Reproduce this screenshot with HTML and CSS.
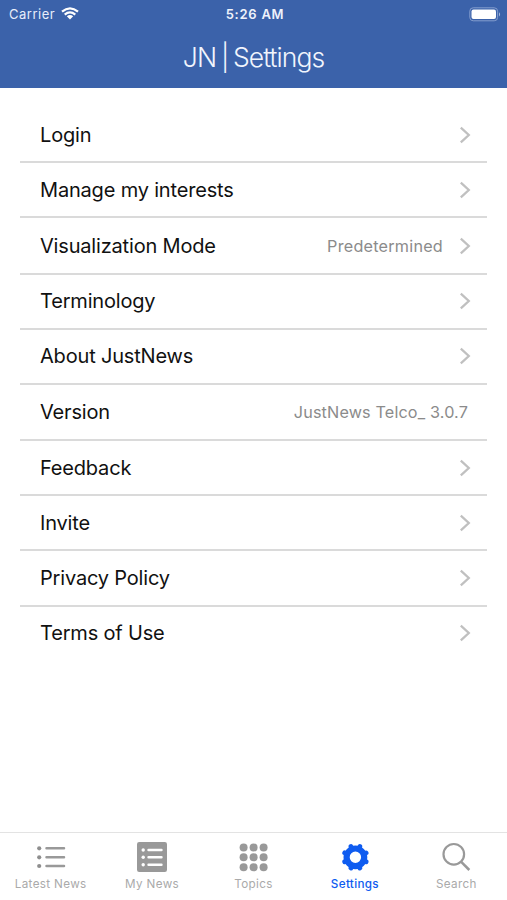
FILE: index.html
```html
<!DOCTYPE html>
<html lang="en">
<head>
<meta charset="utf-8">
<title>JN | Settings</title>
<link rel="stylesheet" href="styles.css">
</head>
<body>
<svg width="0" height="0" class="defs"><symbol id="chevron" viewBox="0 0 12 18"><path d="M1.8 1.6 9.8 9 1.8 16.4" fill="none" stroke="currentColor" stroke-width="2.3"/></symbol></svg>
<header class="header">
  <div class="status">
    <div class="carrier"><span>Carrier</span>
      <svg width="18" height="13" viewBox="0 0 18 13" fill="none" stroke="#fff" stroke-width="2.2"><path d="M1 4.7Q9-2 17 4.7M3.7 7.6Q9 3.2 14.3 7.6"/><path d="M5.8 9.2Q9 6.6 12.2 9.2L9 12.4Z" fill="#fff" stroke="none"/></svg>
    </div>
    <span class="time">5:26 AM</span>
    <div class="power"><svg width="33" height="15" viewBox="0 0 33 15"><rect x=".8" y=".8" width="27.8" height="13" rx="3.4" fill="none" stroke="#849dcd"/><rect x="2.5" y="2.5" width="24.5" height="9.6" rx="2" fill="#fff"/><path d="M30 5.2q2.2 2.1 0 4.2z" fill="#a4b6dc"/></svg></div>
  </div>
  <h1>JN | Settings</h1>
</header>
<main class="list">
  <div class="row"><span class="label">Login</span><svg class="chev"><use href="#chevron"/></svg></div>
  <div class="row"><span class="label">Manage my interests</span><svg class="chev"><use href="#chevron"/></svg></div>
  <div class="row tall"><span class="label">Visualization Mode</span><span class="value">Predetermined</span><svg class="chev"><use href="#chevron"/></svg></div>
  <div class="row snug"><span class="label">Terminology</span><svg class="chev"><use href="#chevron"/></svg></div>
  <div class="row snug"><span class="label">About JustNews</span><svg class="chev"><use href="#chevron"/></svg></div>
  <div class="row tall"><span class="label">Version</span><span class="value last">JustNews Telco_ 3.0.7</span></div>
  <div class="row"><span class="label">Feedback</span><svg class="chev"><use href="#chevron"/></svg></div>
  <div class="row"><span class="label">Invite</span><svg class="chev"><use href="#chevron"/></svg></div>
  <div class="row snug"><span class="label">Privacy Policy</span><svg class="chev"><use href="#chevron"/></svg></div>
  <div class="row"><span class="label">Terms of Use</span><svg class="chev"><use href="#chevron"/></svg></div>
</main>
<nav class="tabs">
  <a class="tab"><svg viewBox="0 0 32 32"><g fill="#8e8e8e"><circle cx="4.2" cy="7.3" r="2.1"/><circle cx="4.2" cy="16.3" r="2.1"/><circle cx="4.2" cy="25" r="2.1"/></g><path d="M11.5 7.3H29M11.5 16.3H29M11.5 25H29" stroke="#999" stroke-width="2.5" stroke-linecap="round"/></svg><span>Latest News</span></a>
  <a class="tab"><svg viewBox="0 0 32 32"><rect x="1" y="1" width="30" height="30" rx="2.2" fill="#999"/><g fill="#fff"><circle cx="7.2" cy="9" r="1.7"/><circle cx="7.2" cy="16.3" r="1.7"/><circle cx="7.2" cy="23.7" r="1.7"/></g><path d="M12.5 9H25.5M12.5 16.3H25.5M12.5 23.7H25.5" stroke="#fff" stroke-width="2.4" stroke-linecap="round"/></svg><span>My News</span></a>
  <a class="tab"><svg viewBox="0 0 32 32" fill="#999"><circle cx="6.6" cy="6.4" r="4"/><circle cx="16.6" cy="6.4" r="4"/><circle cx="26.6" cy="6.4" r="4"/><circle cx="6.6" cy="16.3" r="4"/><circle cx="16.6" cy="16.3" r="4"/><circle cx="26.6" cy="16.3" r="4"/><circle cx="6.6" cy="26.2" r="4"/><circle cx="16.6" cy="26.2" r="4"/><circle cx="26.6" cy="26.2" r="4"/></svg><span>Topics</span></a>
  <a class="tab active"><svg viewBox="0 0 32 32" fill="none" stroke="currentColor"><circle cx="16.4" cy="16.3" r="8.8" stroke-width="6.2"/><g transform="rotate(22.5 16.4 16.3)" stroke-width="4.8" stroke-linecap="round"><path d="M16.4 6V4.7M16.4 26.6v1.3M6.1 16.3H4.8M26.7 16.3h1.3M9.1 9 8.2 8.1M23.7 9l.9-.9M9.1 23.6l-.9.9M23.7 23.6l.9.9"/></g></svg><span>Settings</span></a>
  <a class="tab"><svg viewBox="0 0 32 32" fill="none" stroke="#999"><circle cx="13.8" cy="13.3" r="10.3" stroke-width="2.2"/><path d="M21 20.7 29.3 29" stroke-width="2.5"/></svg><span>Search</span></a>
</nav>
</body>
</html>
```
FILE: styles.css
```css
* { box-sizing: border-box; }
body { margin: 0; height: 900px; display: flex; flex-direction: column; background: #fff; font-family: Inter, "Liberation Sans", sans-serif; color: #111; overflow: hidden; }
.defs { display: block; height: 0; flex: none; }
.header { height: 88.4px; background: #3b62aa; color: #fff; flex: none; }
.status { display: grid; grid-template-columns: 1fr auto 1fr; align-items: center; height: 27px; padding: 1px 5px 0 9px; font-size: 13px; }
.carrier { display: flex; align-items: center; gap: 6px; letter-spacing: .5px; color: #e8eefa; }
.carrier svg { margin-top: -2px; }
.time { font-weight: 600; letter-spacing: .75px; margin-left: -2px; margin-right: -1px; color: #eef2fb; }
.power { display: flex; justify-content: flex-end; }
h1 { margin: 13px 0 0; text-align: center; font-size: 26.5px; line-height: 34px; font-weight: 300; letter-spacing: -.95px; word-spacing: -1.7px; color: #f1f5fd; }
.list { padding: 19.3px 20px 0; flex: 1; }
.row { height: 55.15px; display: flex; align-items: center; padding: 1px 16px 0 20px; border-bottom: 2px solid #dadada; }
.row:first-child { height: 55.3px; padding-top: 2px; }
.row.tall { height: 56.4px; }
.row.snug { padding-top: 0; padding-bottom: 1px; }
.row:last-child { border: 0; height: 53px; padding-top: 0; }
.label { flex: 1; font-size: 20px; line-height: 26px; letter-spacing: -.18px; }
.value { font-size: 16.2px; letter-spacing: .23px; color: #8b8b8b; margin-right: 16px; }
.value.last { margin-right: 3px; letter-spacing: .15px; }
.chev { width: 12px; height: 18px; color: #c0c0c0; }
.tabs { height: 68px; border-top: 1px solid #e3e3e3; display: grid; grid-template-columns: repeat(5, 1fr); flex: none; }
.tab { display: flex; flex-direction: column; align-items: center; padding-top: 8px; color: #aaa; font-size: 11.7px; }
.tab svg { width: 32px; height: 32px; }
.tab span { line-height: 16px; margin-top: 3px; letter-spacing: .34px; white-space: nowrap; }
.tab.active { color: #0f5cf0; }
.tab.active span { font-weight: 500; letter-spacing: .32px; }
```
